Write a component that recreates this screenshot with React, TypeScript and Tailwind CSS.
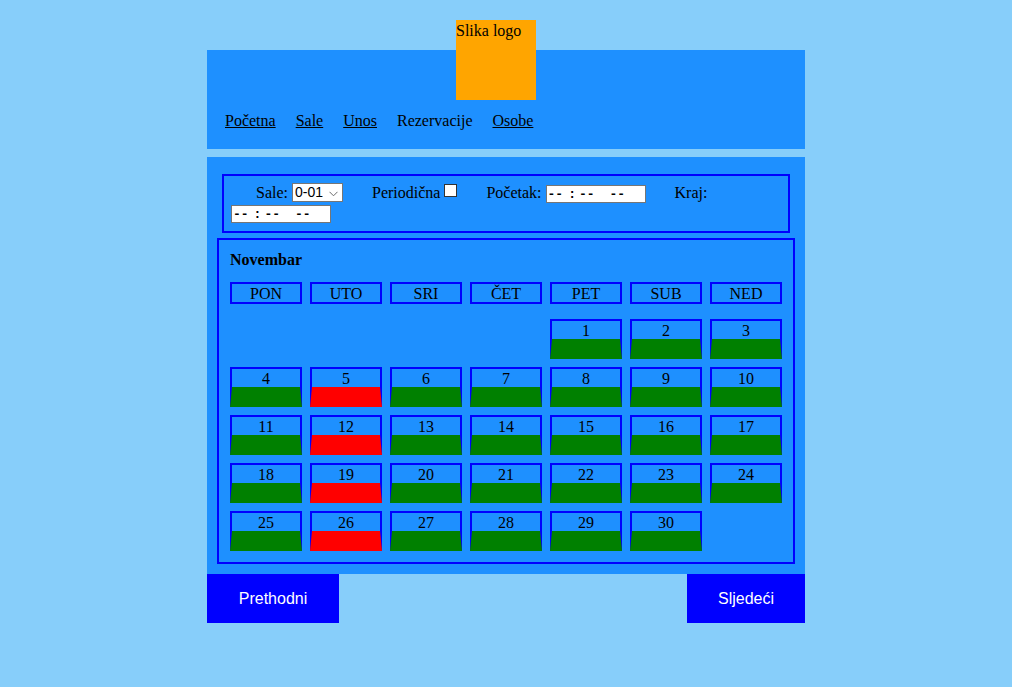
import React from "react";

const dani = ["PON", "UTO", "SRI", "ČET", "PET", "SUB", "NED"];
const zauzeti = [5, 12, 19, 26];

function VrijemeInput() {
    return (
        <span className="inline-flex items-center w-[100px] h-[18px] bg-white border border-[#767676] pl-[1px] font-['Liberation_Mono',monospace] font-bold text-[13px] leading-none text-black">
            <span>--</span>
            <span className="ml-[5px]">:</span>
            <span className="ml-[3px]">--</span>
            <span className="ml-[15px]">--</span>
        </span>
    );
}

function DanCelija({dan}: {dan: number}) {
    const zauzet = zauzeti.includes(dan);
    return (
        <div className={`h-[40px] border-2 border-[#0000FF] border-b-[20px] text-center leading-[20px] ${zauzet ? "border-b-[#FF0000]" : "border-b-[#008000]"}`}>
            {dan}
        </div>
    );
}

export default function App() {
    const prazni = [0, 1, 2, 3];
    const daniMjeseca = Array.from({length: 30}, (_, i) => i + 1);

    return (
        <div className="min-h-screen bg-[#87CEFA] text-black text-[16px] font-['Liberation_Serif',serif]">
            <div className="mx-auto w-[598px] pt-[50px]">
                <header className="relative h-[99px] bg-[#1E90FF] pl-[18px] pt-[62px]">
                    <div className="absolute left-[249px] top-[-30px] w-[80px] h-[80px] bg-[#FFA500] pt-[2px] leading-[18px]">
                        Slika logo
                    </div>
                    <nav className="flex gap-5 leading-[18px]">
                        <a href="#" className="underline">Početna</a>
                        <a href="#" className="underline">Sale</a>
                        <a href="#" className="underline">Unos</a>
                        <span>Rezervacije</span>
                        <a href="#" className="underline">Osobe</a>
                    </nav>
                </header>

                <main className="mt-[8px] bg-[#1E90FF] pt-[17px] pb-[10px]">
                    <form className="mx-[15px] h-[59px] border-2 border-[#0000FF] px-[7px] pt-[6px]">
                        <div className="flex items-center h-[21px] leading-[18px]">
                            <span className="ml-[25px]">Sale:</span>
                            <span className="relative ml-[4px] -mt-[1px] flex">
                                <select className="appearance-none w-[51px] h-[19px] bg-white border border-[#767676] pl-[2px] font-['Liberation_Sans',sans-serif] text-[14px] leading-none" defaultValue="0-01">
                                    <option>0-01</option>
                                    <option>0-02</option>
                                </select>
                                <svg className="pointer-events-none absolute right-[5px] top-[8px]" width="9" height="6" viewBox="0 0 9 6">
                                    <path d="M0.5 0.8 L4.5 4.8 L8.5 0.8" fill="none" stroke="#6b6b6b" strokeWidth="1" />
                                </svg>
                            </span>
                            <span className="ml-[29px]">Periodična</span>
                            <input type="checkbox" className="appearance-none ml-[4px] w-[13px] h-[13px] bg-white border border-[#333333] self-start mt-[2px]" />
                            <span className="ml-[29px]">Početak:</span>
                            <span className="ml-[4px] mt-[3px] flex">
                                <VrijemeInput />
                            </span>
                            <span className="ml-[29px]">Kraj:</span>
                        </div>
                        <div className="flex items-center h-[20px] mt-[1px]">
                            <VrijemeInput />
                        </div>
                    </form>

                    <section className="mx-[10px] mt-[5px] border-2 border-[#0000FF] px-[11px] pt-[11px] pb-[11px]">
                        <h2 className="font-bold leading-[18px]">Novembar</h2>
                        <div className="mt-[13px] grid grid-cols-7 gap-x-[8px]">
                            {dani.map((d) => (
                                <div key={d} className="h-[22px] border-2 border-[#0000FF] text-center leading-[20px]">
                                    {d}
                                </div>
                            ))}
                        </div>
                        <div className="mt-[15px] grid grid-cols-7 gap-[8px]">
                            {prazni.map((p) => (
                                <div key={`p${p}`} className="h-[40px]" />
                            ))}
                            {daniMjeseca.map((d) => (
                                <DanCelija key={d} dan={d} />
                            ))}
                        </div>
                    </section>
                </main>

                <div className="flex justify-between font-['Liberation_Sans',sans-serif] text-white">
                    <button className="h-[49px] w-[132px] bg-[#0000FF]">Prethodni</button>
                    <button className="h-[49px] w-[118px] bg-[#0000FF]">Sljedeći</button>
                </div>
            </div>
        </div>
    );
}
